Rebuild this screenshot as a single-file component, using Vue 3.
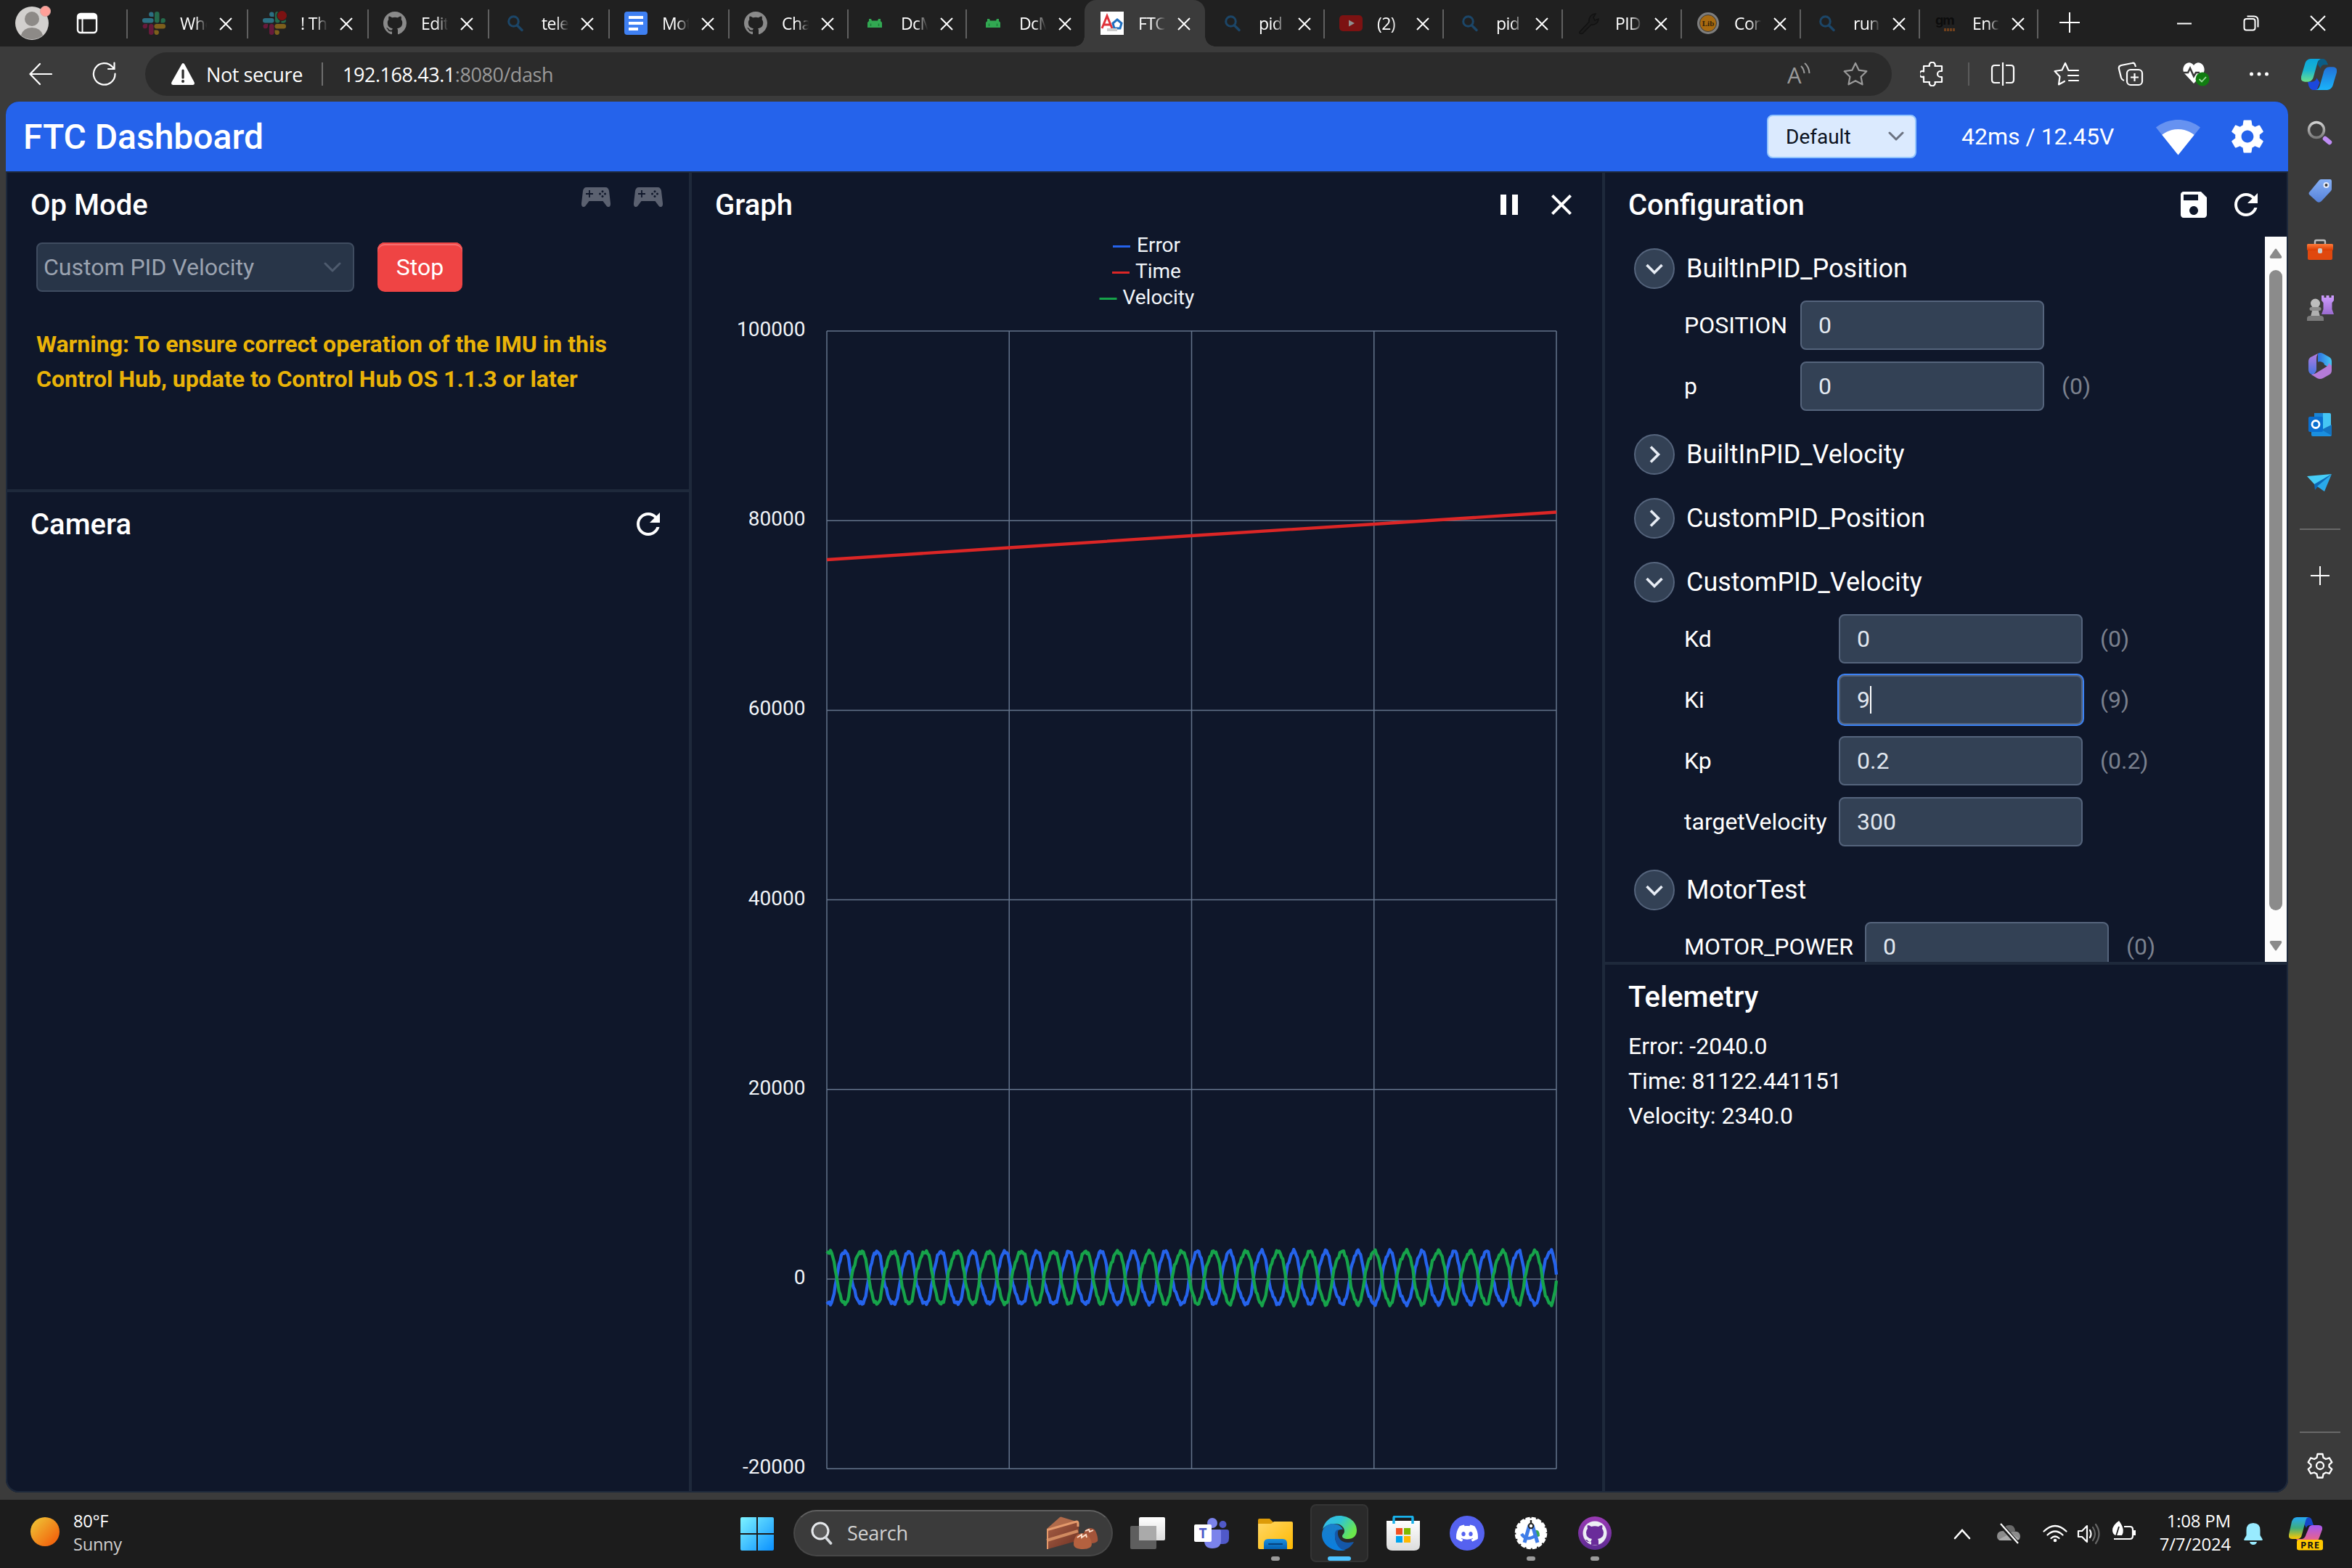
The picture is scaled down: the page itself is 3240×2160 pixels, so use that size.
<script setup>
const tabs = [
  { icon: 'slack', text: 'Whe', w: 166 },
  { icon: 'slack', text: '! Thr', dot: true, w: 166 },
  { icon: 'github', text: 'Editi', w: 166 },
  { icon: 'lens', text: 'tele', w: 166 },
  { icon: 'docs', text: 'Mot', w: 165 },
  { icon: 'github', text: 'Cha', w: 164 },
  { icon: 'android', text: 'DcM', w: 163 },
  { icon: 'android', text: 'DcM', w: 164 },
  { icon: 'first', text: 'FTC', active: true, w: 166 },
  { icon: 'lens', text: 'pid', w: 163 },
  { icon: 'youtube', text: '(2)', w: 164 },
  { icon: 'lens', text: 'pid', w: 164 },
  { icon: 'wrench', text: 'PID', w: 164 },
  { icon: 'lib', text: 'Con', label: 'Lib', w: 164 },
  { icon: 'lens', text: 'run', w: 164 },
  { icon: 'gm', text: 'Enc', label: 'gm', w: 163 },
]

const groups = [
  {
    name: 'BuiltInPID_Position', open: true, labelWidth: 160,
    fields: [{ k: 'POSITION', v: '0' }, { k: 'p', v: '0', cur: '(0)' }],
  },
  { name: 'BuiltInPID_Velocity', open: false },
  { name: 'CustomPID_Position', open: false },
  {
    name: 'CustomPID_Velocity', open: true, labelWidth: 213,
    fields: [
      { k: 'Kd', v: '0', cur: '(0)' },
      { k: 'Ki', v: '9', cur: '(9)', focus: true },
      { k: 'Kp', v: '0.2', cur: '(0.2)' },
      { k: 'targetVelocity', v: '300' },
    ],
  },
  { name: 'MotorTest', open: true, labelWidth: 249, fields: [{ k: 'MOTOR_POWER', v: '0', cur: '(0)' }] },
]

const telemetry = ['Error: -2040.0', 'Time: 81122.441151', 'Velocity: 2340.0']
const sideIcons = ['s-search', 's-tag', 's-tools', 's-games', 's-m365', 's-outlook', 's-send']
const apps = [
  { icon: 'a-view' },
  { icon: 'a-teams', label: 'T' },
  { icon: 'a-folder', run: true },
  { icon: 'a-edge', active: true },
  { icon: 'a-store' },
  { icon: 'a-discord' },
  { icon: 'a-studio', run: true },
  { icon: 'a-github', run: true },
]

// Chart geometry
const L = 1139
const R = 2144
const zeroY = 1762
const step = 261.2
const yTicks = [100000, 80000, 60000, 40000, 20000, 0, -20000].map((v) => ({ v, y: zeroY - (v / 20000) * step }))
const xTicks = [0, 1, 2, 3, 4].map((i) => L + (i * (R - L)) / 4)

const warp = [[0, 0], [0.225, 0.262], [0.485, 0.5], [0.665, 0.742], [1, 1]]
function warped(p) {
  for (let i = 1; i < warp.length; i++) {
    const [a, fa] = warp[i - 1]
    const [b, fb] = warp[i]
    if (p <= b) return fa + ((p - a) / (b - a)) * (fb - fa)
  }
  return 1
}
function wave(sign) {
  const pts = []
  const period = 44.18
  for (let x = L, i = 0; x <= R + 0.1; x += 1.675, i++) {
    const t = (x - 1143) / period
    const c = Math.cos(2 * Math.PI * warped(t - Math.floor(t)))
    const shaped = Math.sign(c) * Math.pow(Math.abs(c), 0.85)
    const jitter = Math.sin(i * 2.4) * 130 + Math.sin(i * 5.1) * 90
    const v = 138 + 2780 * shaped + jitter
    const val = sign > 0 ? v : 300 - v
    pts.push(`${x.toFixed(1)},${(zeroY - val * (step / 20000)).toFixed(1)}`)
  }
  return pts.join(' ')
}
const velocityLine = wave(1)
const errorLine = wave(-1)
</script>

<template>
  <div class="screen">
    <svg class="defs" width="0" height="0">
      <defs>
        <linearGradient id="gWin" x1="0" y1="0" x2="1" y2="1"><stop offset="0" stop-color="#7df3ff" /><stop offset="1" stop-color="#0a90ff" /></linearGradient>
        <linearGradient id="gCopA" x1="0" y1="0" x2="0" y2="1"><stop offset="0" stop-color="#0aa5dd" /><stop offset=".5" stop-color="#1ab5d0" /><stop offset="1" stop-color="#6be08a" /></linearGradient>
        <linearGradient id="gCopB" x1="0" y1="0" x2="0" y2="1"><stop offset="0" stop-color="#2370d8" /><stop offset="1" stop-color="#19b4fa" /></linearGradient>
        <linearGradient id="gPreA" x1="0" y1="0" x2="0" y2="1"><stop offset="0" stop-color="#25a7f5" /><stop offset=".5" stop-color="#3fae7c" /><stop offset="1" stop-color="#ffc800" /></linearGradient>
        <linearGradient id="gPreB" x1="0" y1="0" x2="0" y2="1"><stop offset="0" stop-color="#a458f2" /><stop offset="1" stop-color="#f2647e" /></linearGradient>
        <linearGradient id="gGray" x1="0" y1="0" x2="0" y2="1"><stop offset="0" stop-color="#d0d0d0" /><stop offset="1" stop-color="#7a7a7a" /></linearGradient>
        <linearGradient id="gPurple" x1="0" y1="0" x2="0" y2="1"><stop offset="0" stop-color="#cf9dff" /><stop offset="1" stop-color="#9a6bd0" /></linearGradient>
        <linearGradient id="gTag" x1="0" y1="0" x2="0" y2="1"><stop offset="0" stop-color="#86b0f5" /><stop offset="1" stop-color="#5681d8" /></linearGradient>
        <linearGradient id="gOrange" x1="0" y1="0" x2="0" y2="1"><stop offset="0" stop-color="#ff7a3a" /><stop offset="1" stop-color="#d83b01" /></linearGradient>
        <linearGradient id="gM1" x1="0" y1="0" x2="1" y2="0"><stop offset="0" stop-color="#2f6fe0" /><stop offset="1" stop-color="#45c8f5" /></linearGradient>
        <linearGradient id="gM2" x1="0" y1="0" x2="0" y2="1"><stop offset="0" stop-color="#b57be0" /><stop offset="1" stop-color="#3f74e0" /></linearGradient>
        <linearGradient id="gFold" x1="0" y1="0" x2="1" y2="1"><stop offset="0" stop-color="#ffd766" /><stop offset="1" stop-color="#ffb900" /></linearGradient>
        <linearGradient id="gBlue" x1="0" y1="0" x2="0" y2="1"><stop offset="0" stop-color="#1a90e0" /><stop offset="1" stop-color="#0560b0" /></linearGradient>
        <linearGradient id="gEdge1" x1="0" y1="0" x2="1" y2=".5"><stop offset="0" stop-color="#35b8f0" /><stop offset=".5" stop-color="#2fc4d4" /><stop offset="1" stop-color="#6be84c" /></linearGradient>
        <linearGradient id="gEdge2" x1="0" y1="0" x2="0" y2="1"><stop offset="0" stop-color="#1b7fc8" /><stop offset="1" stop-color="#0a7ee0" /></linearGradient>
        <linearGradient id="gGh" x1="0" y1="0" x2="0" y2="1"><stop offset="0" stop-color="#9a3bb5" /><stop offset="1" stop-color="#5d2a92" /></linearGradient>
        <linearGradient id="gWhite" x1="0" y1="0" x2="0" y2="1"><stop offset="0" stop-color="#ffffff" /><stop offset="1" stop-color="#dcdcdc" /></linearGradient>
        <linearGradient id="gCake" x1="0" y1="0" x2="1" y2="1"><stop offset="0" stop-color="#a85f45" /><stop offset="1" stop-color="#6e3224" /></linearGradient>
        <linearGradient id="gSun" x1="0" y1="0" x2="1" y2="1"><stop offset=".1" stop-color="#efc033" /><stop offset=".8" stop-color="#f26a10" /></linearGradient>
      </defs>

      <symbol id="slack" viewBox="0 0 32 32">
        <g fill="#2c6f82"><path d="M15.500 7h-3.300a3.200 3.200 0 1 1 3.300-3.300z" /><rect x="0" y="9" width="15.500" height="6.500" rx="3.200" /></g>
        <g fill="#256b4c"><rect x="17" y="0" width="6.500" height="15.500" rx="3.200" /><path d="M25.500 15.500v-3.300a3.200 3.200 0 1 1 3.300 3.300z" /></g>
        <g fill="#7d5f1c"><rect x="16.500" y="17" width="15.500" height="6.500" rx="3.200" /><path d="M16.500 25.500h3.300a3.200 3.200 0 1 1-3.300 3.300z" /></g>
        <g fill="#661a3b"><rect x="9" y="17" width="6.500" height="15" rx="3.200" /><path d="M7 17v3.300A3.200 3.200 0 1 1 3.200 17z" /></g>
      </symbol>
      <symbol id="github" viewBox="0 0 16 16">
        <path fill="#8a8a8a" d="M8 0C3.580 0 0 3.580 0 8c0 3.540 2.290 6.530 5.470 7.590.4.070.550-.170.550-.380 0-.190-.010-.820-.010-1.490-2.010.370-2.530-.490-2.690-.940-.090-.230-.480-.940-.820-1.130-.280-.150-.680-.520-.010-.530.630-.010 1.080.580 1.230.820.720 1.210 1.870.870 2.330.660.070-.520.280-.870.510-1.070-1.780-.2-3.640-.890-3.640-3.950 0-.870.310-1.590.820-2.150-.080-.2-.360-1.020.080-2.120 0 0 .670-.210 2.200.820.640-.180 1.320-.270 2-.270s1.360.090 2 .270c1.530-1.040 2.200-.820 2.200-.820.440 1.100.160 1.920.080 2.120.510.560.820 1.270.820 2.150 0 3.070-1.870 3.750-3.650 3.950.290.250.540.730.540 1.480 0 1.070-.010 1.930-.010 2.200 0 .210.150.460.550.380A8.010 8.010 0 0 0 16 8c0-4.420-3.580-8-8-8z" />
      </symbol>
      <symbol id="lens" viewBox="0 0 32 32"><circle cx="13.500" cy="13.500" r="6.800" fill="none" stroke="#1c4668" stroke-width="3" /><path d="M18.500 19l6.500 6.500" stroke="#1c4668" stroke-width="3.400" stroke-linecap="round" /></symbol>
      <symbol id="docs" viewBox="0 0 32 32"><rect width="32" height="32" rx="4" fill="#3f80f2" /><path d="M6 8h20M6 16h20M6 24h13" stroke="#fff" stroke-width="4" /></symbol>
      <symbol id="android" viewBox="0 0 32 32"><path d="M6 22v-7l2-2v-3h3l1 2.500h8l1-2.500h3v3l2 2v7z" fill="#32a852" /><path d="M10.500 16.500v3.500M21.500 16.500v3.500" stroke="#1c7a38" stroke-width="1.500" /></symbol>
      <symbol id="first" viewBox="0 0 32 32"><rect width="32" height="32" fill="#fff" /><path d="M2 23L9 6l7 17M4 18h9" fill="none" stroke="#e0343b" stroke-width="3" /><path d="M23 11l6 5-2 7h-8l-2-7z" fill="none" stroke="#1f6fc0" stroke-width="3" /><path d="M9 25h14" stroke="#ccc" stroke-width="4" /></symbol>
      <symbol id="youtube" viewBox="0 0 32 32"><rect y="5" width="32" height="22" rx="5" fill="#7c1212" /><path d="M13 11.500v9l8-4.500z" fill="#8f8f8f" /></symbol>
      <symbol id="wrench" viewBox="0 0 32 32"><path d="M3 28l13-14c-1-5 3-11 9-11l-3 5 2 4 5-2c0 5-5 9-10 8L7 30c-3 1-5 0-4-2z" fill="#1c1c1c" stroke="#121212" stroke-width="1.500" /></symbol>
      <symbol id="lib" viewBox="0 0 32 32"><circle cx="16" cy="16" r="15" fill="#7e7e7e" /><circle cx="16" cy="16" r="11.500" fill="#a86a10" stroke="#3b3b3b" /></symbol>
      <symbol id="gm" viewBox="0 0 32 32"><path d="M13 25h15" stroke="#70401c" stroke-width="4" stroke-dasharray="3 1" /></symbol>

      <symbol id="copilot" viewBox="0 0 48 42">
        <path d="M28 0c4 0 6 2 7 5l1.500 3H32c-4 0-5 2-6 5l-4-6 2-6z" fill="#0b5d86" />
        <path d="M16 42c-3 0-5-3-6-6l-1-5h5c4 0 6-2 7-5l4 6-4 10z" fill="#1b48dd" />
        <path d="M13 0h15c-3 0-5 2-6 5l-5 18c-1 5-4 8-8 8H5c-4 0-6-3-5-7L5 7c1-4 4-7 8-7z" fill="url(#gCopA)" />
        <path d="M35 42H19c3 0 5-2 6-5l5-18c1-5 4-8 8-8h5c4 0 6 3 5 7l-5 17c-1 4-4 7-8 7z" fill="url(#gCopB)" />
      </symbol>

      <symbol id="s-search" viewBox="0 0 40 40"><circle cx="15" cy="16" r="10.500" fill="none" stroke="url(#gGray)" stroke-width="3.500" /><path d="M27 28l6 5" stroke="#bf8cf5" stroke-width="6.500" stroke-linecap="round" /></symbol>
      <symbol id="s-tag" viewBox="0 0 40 40"><path d="M5 22L19 5q1-1 3-1h12q2 0 2 3v10q0 2-1 3L22 34q-3 3-6 1L5 25q-1-2 0-3z" fill="url(#gTag)" /><circle cx="28.500" cy="12" r="3" fill="#3b3b3b" stroke="#e8eefc" stroke-width="2" /></symbol>
      <symbol id="s-tools" viewBox="0 0 40 40"><path d="M13 12V9q0-2 2-2h10q2 0 2 2v3" fill="none" stroke="#bdbdbd" stroke-width="2.400" /><rect x="3" y="18" width="34" height="16" rx="2" fill="#e0480e" /><rect x="2" y="12" width="36" height="9" rx="1.500" fill="url(#gOrange)" /><rect x="17" y="18" width="6" height="7" rx="2" fill="#ccc" /></symbol>
      <symbol id="s-games" viewBox="0 0 40 40"><path d="M23 3h3.500v3h3V3h4v3h3V3H40v7l-2.500 3v9L40 29H23l2.500-7v-9L23 10z" transform="translate(-1 0)" fill="url(#gPurple)" /><circle cx="13.500" cy="14" r="6.500" fill="#bdbdbd" /><path d="M10 20h7l3 12H7z" fill="#b0b0b0" /><rect x="5.500" y="19" width="16" height="5" rx="2.500" fill="#8c8c8c" /><path d="M2 38v-3q0-4 4-4h15q4 0 4 4v3z" fill="#7a7a7a" /></symbol>
      <symbol id="s-m365" viewBox="0 0 40 40">
        <path d="M17 3q3-2 7 0l9 5q3 2 3 6v10L25 18q-4-2-8-1z" fill="url(#gM1)" />
        <path d="M4 14q0-4 3-6l10-5q-2 3-2 8v14q0 3-5 8l-3-2q-3-2-3-6z" fill="url(#gM2)" />
        <path d="M36 20v6q0 4-3 6l-9 5q-4 2-8 0l-8-5q4 0 8-3l13-8q3-2 3-5z" fill="#b57bd8" />
        <path d="M15 17q1-3 5-3 6 1 6 5 0 2-3 4l-6 3q-2-1-2-4z" fill="#3b3b3b" />
      </symbol>
      <symbol id="s-outlook" viewBox="0 0 40 40"><rect x="12" y="4" width="23" height="26" rx="2" fill="#45c6f5" /><rect x="12" y="4" width="12" height="14" fill="#1a86d8" /><path d="M8 26h28v8q0 2-2 2H10q-2 0-2-2z" fill="#1a8fe0" /><path d="M36 20v15L22 27z" fill="#1373c0" /><rect x="4" y="9" width="20" height="21" rx="2" fill="#0a6fd0" /><circle cx="14" cy="19.500" r="5" fill="none" stroke="#fff" stroke-width="2.800" /></symbol>
      <symbol id="s-send" viewBox="0 0 40 40"><path d="M2 11L36 8 13 23z" fill="#46cdf7" /><path d="M36 8L12 22l1 8 5-6z" fill="#0c6ab8" /><path d="M36 8L26 32l-10-7z" fill="#29a9ea" /></symbol>

      <symbol id="a-view" viewBox="0 0 48 48"><rect x="12" y="2" width="36" height="32" rx="2" fill="url(#gWhite)" /><rect x="0" y="14" width="36" height="32" rx="2" fill="#666" opacity=".9" /><path d="M12 14h24v20H12z" fill="#aaa" /></symbol>
      <symbol id="a-teams" viewBox="0 0 48 48"><circle cx="39.500" cy="12" r="5" fill="#5059c9" /><path d="M34 19h11q3 0 3 3v9q0 8-8 8h-6z" fill="#5059c9" /><circle cx="25" cy="10" r="7" fill="#7b83eb" /><path d="M14 19h21q2 0 2 2v13q0 11-12 11-11 0-11-11z" fill="#7b83eb" /><rect x="0" y="12" width="24" height="24" rx="2" fill="#fff" /></symbol>
      <symbol id="a-folder" viewBox="0 0 48 48"><path d="M0 6q0-2 2-2h14l5 5v8H0z" fill="#dd9b08" /><path d="M0 11h18l4-3h24q2 0 2 2v34q0 2-2 2H2q-2 0-2-2z" fill="url(#gFold)" /><path d="M8 46V38q0-6 6-6h20q6 0 6 6v8z" fill="url(#gBlue)" /><path d="M15 39h18" stroke="#06427d" stroke-width="2.200" stroke-linecap="round" /></symbol>
      <symbol id="a-edge" viewBox="0 0 48 48"><path d="M1 19C3 8 12 0 24 0c14 0 24 9 24 20 0 8-5 12-12 12-6 0-8-2-8-4s3-3 3-7c0-5-5-10-13-10C9 11 3 15 1 19z" fill="url(#gEdge1)" /><path d="M0 26c0-8 6-15 15-15 8 0 12 4 14 8-6-1-11 3-11 10 0 9 7 17 15 18-3 1-5 1-8 1C11 48 0 38 0 26z" fill="url(#gEdge2)" /><path d="M18 28c-1-6 2-9 5-9-3 6 0 18 13 18 4 0 6-1 8-1-3 6-8 10-15 11-7-2-11-11-11-19z" fill="#1457a8" /></symbol>
      <symbol id="a-store" viewBox="0 0 48 48"><path d="M1 7h46v33q0 8-8 8H9q-8 0-8-8z" fill="url(#gWhite)" /><path d="M11 11V3q0-2 2-2h22q2 0 2 2v8" fill="none" stroke="#18b1ea" stroke-width="3.400" /><path d="M14 17h9v9h-9z" fill="#f25022" /><path d="M25 17h9v9h-9z" fill="#7fba00" /><path d="M14 28h9v9h-9z" fill="#00a4ef" /><path d="M25 28h9v9h-9z" fill="#ffb900" /></symbol>
      <symbol id="a-discord" viewBox="0 0 48 48"><circle cx="24" cy="24" r="24" fill="#5562f0" /><path transform="translate(9 9) scale(1.250)" fill="#fff" d="M20.317 4.370a19.791 19.791 0 0 0-4.885-1.515.074.074 0 0 0-.079.037c-.211.375-.445.865-.608 1.250-1.845-.276-3.680-.276-5.487 0-.164-.393-.406-.874-.618-1.250a.077.077 0 0 0-.079-.037A19.736 19.736 0 0 0 3.677 4.370a.070.070 0 0 0-.032.028C.533 9.046-.319 13.580.099 18.058a.082.082 0 0 0 .031.056c2.053 1.508 4.041 2.423 5.993 3.029a.078.078 0 0 0 .084-.028c.462-.630.873-1.295 1.226-1.994a.076.076 0 0 0-.042-.106c-.653-.248-1.274-.550-1.872-.892a.077.077 0 0 1-.008-.128c.126-.094.252-.192.372-.291a.074.074 0 0 1 .078-.011c3.928 1.793 8.180 1.793 12.061 0a.074.074 0 0 1 .079.010c.120.099.246.198.373.292a.077.077 0 0 1-.007.128 12.299 12.299 0 0 1-1.873.891.077.077 0 0 0-.041.107c.360.698.772 1.363 1.225 1.993a.076.076 0 0 0 .084.029c1.961-.607 3.950-1.522 6.002-3.029a.077.077 0 0 0 .031-.055c.500-5.177-.838-9.674-3.549-13.660a.061.061 0 0 0-.031-.029zM8.020 15.331c-1.183 0-2.157-1.086-2.157-2.419s.956-2.419 2.157-2.419c1.211 0 2.176 1.095 2.157 2.419 0 1.333-.956 2.419-2.157 2.419zm7.975 0c-1.183 0-2.157-1.086-2.157-2.419s.955-2.419 2.157-2.419c1.211 0 2.176 1.095 2.157 2.419 0 1.333-.946 2.419-2.157 2.419z" /></symbol>
      <symbol id="a-studio" viewBox="0 0 48 48"><circle cx="24" cy="24" r="20.500" fill="#fff" stroke="#fff" stroke-width="3.600" stroke-dasharray="6 2.050" /><circle cx="24" cy="24" r="20.500" fill="#fff" /><path d="M29 20q7-2 7 8l-5 2z" fill="#3ba653" /><path d="M22 13L15 37M26 13l7 24" stroke="#3f7de8" stroke-width="5" /><path d="M11 25q7 11 20 2" fill="none" stroke="#3f7de8" stroke-width="4.500" /><circle cx="24" cy="14" r="3.200" fill="#fff" stroke="#222" stroke-width="2" /><path d="M24 6v5" stroke="#222" stroke-width="2.400" /></symbol>
      <symbol id="a-github" viewBox="0 0 48 48"><circle cx="24" cy="24" r="23" fill="url(#gGh)" /><circle cx="24" cy="24" r="16.500" fill="#eceef4" /><path d="M19 40v-4q-6 1-8-3 3 0 4 2 2 2 4 0 0-2 1-3-8-1-8-9 0-3 2-5-1-3 0-5 3 0 5 2 5-1.500 10 0 2-2 5-2 1 2 0 5 2 2 2 5 0 8-8 9 1 1 1 3v5z" fill="#6a2b9a" /></symbol>
    </svg>

    <header class="tabbar">
      <div class="tab-left">
        <div class="avatar">
          <svg width="46" height="46" viewBox="0 0 46 46"><circle cx="23" cy="23" r="23" fill="#d2d0ce" /><circle cx="23" cy="17" r="10" fill="#8d8a87" /><path d="M8 39.500q3-10.500 15-10.500t15 10.500A23 23 0 0 1 8 39.500z" fill="#8d8a87" /></svg>
          <i class="badge"></i>
        </div>
        <svg width="30" height="30" viewBox="0 0 30 30" class="tab-act"><rect x="2" y="2" width="26" height="26" rx="4" fill="none" stroke="#fff" stroke-width="2.400" /><path d="M2 6q0-4 4-4h18q4 0 4 4v3.500H2z" fill="#fff" /><path d="M8.500 9v19" stroke="#fff" stroke-width="2" /></svg>
      </div>
      <div v-for="(t, i) in tabs" :key="i" class="tab" :class="{ active: t.active, nosep: i === 9 }" :style="{ width: t.w + 'px' }">
        <span class="fav"><svg width="32" height="32"><use :href="'#' + t.icon" /></svg><i v-if="t.dot" class="fav-dot"></i><b v-if="t.label" :class="'lab-' + t.icon">{{ t.label }}</b></span>
        <span class="tab-text">{{ t.text }}</span>
        <svg class="x" width="18" height="18" viewBox="0 0 18 18"><path d="M1 1l16 16M17 1L1 17" stroke="#fff" stroke-width="2" /></svg>
      </div>
      <div class="newtab"><svg width="28" height="28" viewBox="0 0 28 28"><path d="M14 0v28M0 14h28" stroke="#fff" stroke-width="2" /></svg></div>
      <div class="winbtns">
        <svg width="22" height="22" viewBox="0 0 22 22"><path d="M1 11.500h20" stroke="#fff" stroke-width="2" /></svg>
        <svg width="22" height="22" viewBox="0 0 22 22" fill="none" stroke="#fff" stroke-width="2"><rect x="1.500" y="5" width="15" height="15.500" rx="3" /><path d="M5.500 1.500H15q5.500 0 5.500 5.500v9.500" /></svg>
        <svg width="22" height="22" viewBox="0 0 22 22"><path d="M1 1l20 20M21 1L1 21" stroke="#fff" stroke-width="2" /></svg>
      </div>
    </header>

    <div class="toolbar">
      <div class="nav">
        <svg width="32" height="32" viewBox="0 0 32 32" fill="none" stroke="#fff" stroke-width="2.200" stroke-linecap="round"><path d="M31 16H1.500M15 2L1.500 16 15 30" /></svg>
        <svg width="34" height="34" viewBox="0 0 34 34" fill="none" stroke="#fff" stroke-width="2.200" stroke-linecap="round"><path d="M31.500 16.500A14.800 14.800 0 1 1 28 7.300l2 2.200M30.500 1.500v8.500h-8.500" /></svg>
      </div>
      <div class="address">
        <svg width="34" height="32" viewBox="0 0 34 32"><path d="M17 1q1.500 0 2.500 2l13 24q1.500 4-2 4h-27q-3.500 0-2-4L15 3q1-2 2-2z" fill="#fff" /><path d="M17 11v10" stroke="#2b2b2b" stroke-width="3.200" stroke-linecap="round" /><circle cx="17" cy="26" r="2" fill="#2b2b2b" /></svg>
        <span class="notsec">Not secure</span>
        <i class="vsep"></i>
        <span class="url">192.168.43.1<em>:8080/dash</em></span>
        <div class="addr-icons">
          <svg width="32" height="34" viewBox="0 0 32 34" fill="none" stroke="#9a9a9a" stroke-width="2"><text x="0" y="30" font-family="Open Sans, sans-serif" font-size="31" fill="#9a9a9a" stroke="none">A</text><path d="M19 6q4 4 4.500 10M24 2q6 5 6.500 14" /></svg>
          <svg width="34" height="34" viewBox="0 0 34 34" fill="none" stroke="#9a9a9a" stroke-width="2.200" stroke-linejoin="round"><path d="M17 2l4.700 9.700 10.600 1.500-7.700 7.500 1.900 10.600L17 26.200l-9.500 5.100 1.900-10.600-7.700-7.500 10.600-1.500z" /></svg>
        </div>
      </div>
      <div class="tools">
        <svg width="34" height="34" viewBox="0 0 34 34" fill="none" stroke="#fff" stroke-width="2.200" stroke-linejoin="round"><path d="M5 6h8a4 4 0 1 1 7.500 0h9.500v7h-2a4 4 0 0 0 0 8h2v7h-9.500a4 4 0 1 1-7.500 0H5v-7.500a4 4 0 1 1 0-7z" /></svg>
        <i class="vsep dim"></i>
        <svg width="34" height="34" viewBox="0 0 34 34" fill="none" stroke="#fff" stroke-width="2.200"><path d="M13 5H6Q2 5 2 9v16q0 4 4 4h7M21 5h7q4 0 4 4v16q0 4-4 4h-7M17 1v32" /></svg>
        <svg width="36" height="34" viewBox="0 0 36 34" fill="none" stroke="#fff" stroke-width="2.200" stroke-linejoin="round" stroke-linecap="round"><path d="M30 12H20.500L16 2l-4.500 9.500L1.500 13l7 7.500-1.500 11 8-4.500M22 12h12M20 19h14M21 26h13" /></svg>
        <svg width="36" height="34" viewBox="0 0 36 34" fill="none" stroke="#fff" stroke-width="2.200" stroke-linejoin="round"><rect x="13" y="11" width="21" height="21" rx="5" /><path d="M23.500 16v11M18 21.500h11M25 7l-1-3q-1-3-4-2L5 5Q1 6 2 10l3 12q1 3 4 4" /></svg>
        <svg width="40" height="38" viewBox="0 0 40 38"><path d="M16 32L3 18C-3 9 9-3 16 7c7-10 19 2 13 11z" fill="#fff" /><path d="M0 17h8l3-6 5 11 3-5h5" fill="none" stroke="#3b3b3b" stroke-width="2.500" /><circle cx="28" cy="26" r="9.500" fill="#107c10" /><path d="M23.500 26l3.500 3.500 6-6.500" fill="none" stroke="#9fdc9f" stroke-width="1.800" /></svg>
        <svg width="28" height="8" viewBox="0 0 28 8" fill="#fff"><circle cx="3.500" cy="4" r="2.500" /><circle cx="14" cy="4" r="2.500" /><circle cx="24.500" cy="4" r="2.500" /></svg>
        <svg width="49" height="43" class="cop"><use href="#copilot" /></svg>
      </div>
    </div>

    <div class="main">
      <div class="app">
        <div class="appbar">
          <h1>FTC Dashboard</h1>
          <div class="layout-select">Default<svg width="22" height="14" viewBox="0 0 22 14"><path d="M2 2l9 9 9-9" fill="none" stroke="#6b7280" stroke-width="3" stroke-linecap="round" stroke-linejoin="round" /></svg></div>
          <span class="ping">42ms / 12.45V</span>
          <svg class="wifi" width="63" height="63" viewBox="0 0 24 24" fill="#fff"><path opacity=".3" d="M12 21.500L23.640 7c-.450-.340-4.930-4-11.640-4C5.280 3 .810 6.660.360 7z" /><path d="M3.530 10.950L12 21.500l8.470-10.550C20.040 10.620 16.810 8 12 8c-4.810 0-8.040 2.620-8.470 2.950z" /></svg>
          <svg class="gear" width="56" height="56" viewBox="0 0 24 24" fill="#fff"><path d="M19.140 12.940c.040-.3.060-.610.060-.940 0-.320-.020-.640-.070-.940l2.030-1.580c.180-.140.230-.410.120-.610l-1.920-3.320c-.120-.220-.370-.290-.590-.220l-2.390.960c-.5-.380-1.030-.7-1.620-.940l-.360-2.540c-.040-.240-.240-.410-.480-.410h-3.840c-.240 0-.430.170-.470.410l-.360 2.540c-.590.240-1.130.570-1.620.940l-2.390-.960c-.220-.080-.470 0-.590.220L2.740 8.870c-.120.210-.080.470.120.610l2.030 1.580c-.050.3-.090.630-.090.940s.020.640.070.940l-2.030 1.580c-.180.140-.230.410-.120.610l1.920 3.320c.120.220.370.290.590.220l2.390-.960c.5.380 1.030.7 1.620.940l.360 2.540c.050.240.240.410.480.410h3.840c.240 0 .440-.170.470-.410l.360-2.540c.590-.240 1.130-.560 1.620-.940l2.390.960c.220.080.470 0 .590-.220l1.920-3.320c.120-.220.070-.470-.120-.610zM12 15.600c-1.980 0-3.600-1.620-3.600-3.600s1.620-3.600 3.600-3.600 3.600 1.620 3.600 3.600-1.620 3.600-3.600 3.600z" /></svg>
        </div>

        <div class="panels">
          <div class="col col-left">
            <section class="panel opmode">
              <div class="phead">
                <h2>Op Mode</h2>
                <div class="pads">
                  <svg v-for="n in 2" :key="n" width="40" height="28" viewBox="0 0 40 28"><path fill="#5b6170" d="M7 0h26c3 0 4.500 2 5 5l2 17c.3 3-1 5-3 5-1.500 0-2.300-.8-3-2l-4.500-6h-19L6 25c-.7 1.200-1.500 2-3 2-2 0-3.300-2-3-5L2 5c.5-3 2-5 5-5z" /><path d="M11 4v10M6 9h10" stroke="#0f172a" stroke-width="1.800" /><g fill="#0f172a"><circle cx="29" cy="5.700" r="1.500" /><circle cx="29" cy="12.500" r="1.500" /><circle cx="25.500" cy="9.100" r="1.500" /><circle cx="32.500" cy="9.100" r="1.500" /></g></svg>
                </div>
              </div>
              <div class="oprow">
                <div class="opselect">Custom PID Velocity<svg width="24" height="16" viewBox="0 0 24 16"><path d="M2 3l10 10L22 3" fill="none" stroke="#4e5b6e" stroke-width="3" stroke-linecap="round" stroke-linejoin="round" /></svg></div>
                <button class="stop">Stop</button>
              </div>
              <p class="warn">Warning: To ensure correct operation of the IMU in this<br />Control Hub, update to Control Hub OS 1.1.3 or later</p>
            </section>
            <section class="panel camera">
              <div class="phead">
                <h2>Camera</h2>
                <div class="acts"><svg width="48" height="48" viewBox="0 0 24 24" fill="#fff"><path d="M17.650 6.350C16.200 4.900 14.210 4 12 4c-4.420 0-7.990 3.580-7.990 8s3.570 8 7.990 8c3.730 0 6.840-2.550 7.730-6h-2.080c-.820 2.330-3.040 4-5.650 4-3.310 0-6-2.690-6-6s2.690-6 6-6c1.660 0 3.140.690 4.220 1.780L13 11h7V4z" /></svg></div>
              </div>
            </section>
          </div>

          <section class="panel graph">
            <div class="phead">
              <h2>Graph</h2>
              <div class="acts">
                <svg width="48" height="48" viewBox="0 0 24 24" fill="#fff"><path d="M6 19h4V5H6zM14 5v14h4V5z" /></svg>
                <svg width="48" height="48" viewBox="0 0 24 24" fill="#fff"><path d="M19 6.410L17.590 5 12 10.590 6.410 5 5 6.410 10.590 12 5 17.590 6.410 19 12 13.410 17.590 19 19 17.590 13.410 12z" /></svg>
              </div>
            </div>
            <svg class="chart" width="1254" height="1728" viewBox="953 326 1254 1728">
              <g class="lgd">
                <path d="M1533 339.500h24" stroke="#2563eb" /><text x="1566" y="347">Error</text>
                <path d="M1532 375.500h24" stroke="#dc2626" /><text x="1564" y="383">Time</text>
                <path d="M1514.500 411.500h24" stroke="#16a34a" /><text x="1546.500" y="419">Velocity</text>
              </g>
              <g class="grid">
                <path v-for="t in yTicks" :key="'y' + t.v" :d="`M${L} ${t.y}H${R}`" />
                <path v-for="x in xTicks" :key="'x' + x" :d="`M${x} ${yTicks[0].y}V${yTicks[6].y}`" />
              </g>
              <g class="ylab"><text v-for="t in yTicks" :key="t.v" x="1109.500" :y="t.y + 7">{{ t.v }}</text></g>
              <g class="series">
                <polyline :points="errorLine" stroke="#2563eb" />
                <path :d="`M${L} 771L1390 754.500L1641 738L1893 722L${R} 705.500`" stroke="#dc2626" />
                <polyline :points="velocityLine" stroke="#16a34a" />
              </g>
            </svg>
          </section>

          <div class="col col-right">
            <section class="panel config">
              <div class="phead">
                <h2>Configuration</h2>
                <div class="acts">
                  <svg width="48" height="48" viewBox="0 0 24 24" fill="#fff"><path d="M17 3H5c-1.110 0-2 .9-2 2v14c0 1.100.890 2 2 2h14c1.100 0 2-.9 2-2V7zM12 19c-1.660 0-3-1.340-3-3s1.340-3 3-3 3 1.340 3 3-1.340 3-3 3zm3-10H5V5h10z" /></svg>
                  <svg width="48" height="48" viewBox="0 0 24 24" fill="#fff"><path d="M17.650 6.350C16.200 4.900 14.210 4 12 4c-4.420 0-7.990 3.580-7.990 8s3.570 8 7.990 8c3.730 0 6.840-2.550 7.730-6h-2.080c-.820 2.330-3.040 4-5.650 4-3.310 0-6-2.690-6-6s2.690-6 6-6c1.660 0 3.140.690 4.220 1.780L13 11h7V4z" /></svg>
                </div>
              </div>
              <div class="cfgbody">
                <div class="cfglist">
                  <div v-for="g in groups" :key="g.name" class="group">
                    <div class="ghead">
                      <span class="knob"><svg width="56" height="56" viewBox="0 0 56 56" fill="none" stroke="#e8edf5" stroke-width="3.600"><path v-if="g.open" d="M17.500 23L28 33.500 38.500 23" /><path v-else d="M23 17.500L33.500 28 23 38.500" /></svg></span>
                      <span>{{ g.name }}</span>
                    </div>
                    <div v-if="g.open" class="fields">
                      <div v-for="f in g.fields" :key="f.k" class="field">
                        <span class="flabel" :style="{ width: g.labelWidth + 'px' }">{{ f.k }}</span>
                        <span class="finput" :class="{ focus: f.focus }">{{ f.v }}<i v-if="f.focus" class="caret"></i></span>
                        <span class="fcur">{{ f.cur }}</span>
                      </div>
                    </div>
                  </div>
                </div>
                <div class="scroll">
                  <svg width="18" height="14" viewBox="0 0 18 14"><path d="M8 1q1-1 2 0l7 10q1 3-2 3H3q-3 0-2-3z" fill="#8b8b8b" /></svg>
                  <i class="thumb"></i>
                  <svg width="18" height="14" viewBox="0 0 18 14"><path d="M8 13q1 1 2 0l7-10q1-3-2-3H3Q0 0 1 3z" fill="#8b8b8b" /></svg>
                </div>
              </div>
            </section>
            <section class="panel telem">
              <div class="phead"><h2>Telemetry</h2></div>
              <p v-for="t in telemetry" :key="t">{{ t }}</p>
            </section>
          </div>
        </div>
      </div>

      <aside class="side">
        <div v-for="s in sideIcons" :key="s" class="sitem"><svg width="40" height="40"><use :href="'#' + s" /></svg></div>
        <i class="sline"></i>
        <svg class="splus" width="26" height="26" viewBox="0 0 26 26"><path d="M13 0v26M0 13h26" stroke="#fff" stroke-width="2" /></svg>
        <span class="grow"></span>
        <i class="sline"></i>
        <svg class="sgear" width="36" height="36" viewBox="0 0 36 36" fill="none" stroke="#fff" stroke-width="2.300" stroke-linejoin="round"><path d="M14.500 2h7l1 5 3.500 2 4.800-1.700 3.500 6-3.800 3.300v3l3.800 3.300-3.500 6L26 27.500l-3.500 2-1 5h-7l-1-5-3.500-2-4.800 1.400-3.500-6 3.800-3.300v-3L1.700 13.300l3.500-6L10 9l3.500-2z" /><circle cx="18" cy="18" r="5" /></svg>
      </aside>
    </div>

    <footer class="taskbar">
      <div class="weather">
        <svg width="42" height="42" viewBox="0 0 42 42"><circle cx="21" cy="21" r="20" fill="url(#gSun)" /></svg>
        <div class="wtext"><span>80°F</span><span class="sub">Sunny</span></div>
      </div>
      <div class="center">
        <svg class="win" width="46" height="46" viewBox="0 0 46 46"><path fill="url(#gWin)" d="M0 2q0-2 2-2h20v22H0zM24 0h20q2 0 2 2v20H24zM0 24h22v22H2q-2 0-2-2zM24 24h22v20q0 2-2 2H24z" /></svg>
        <div class="search">
          <svg width="30" height="32" viewBox="0 0 30 32"><circle cx="13" cy="13" r="11" fill="#5a5a5a" stroke="#e6e9ec" stroke-width="3" /><path d="M20.500 22l7 8" stroke="#d5d9dd" stroke-width="3.600" stroke-linecap="round" /></svg>
          <span>Search</span>
          <svg class="cake" width="72" height="46" viewBox="0 0 72 46"><path d="M1 17L19 1q2-1 3 0l20 6-41 14z" fill="#b06a4a" /><path d="M2 18L42 6q3 0 3 3v24L2 45z" fill="url(#gCake)" /><path d="M2 18.500L42 7q2 0 2 3v4" fill="none" stroke="#e49a6c" stroke-width="3" /><path d="M1 33l43-13" stroke="#d08a60" stroke-width="4" /><path d="M2 17v28" stroke="#e49a6c" stroke-width="2" /><path d="M52 22q3-6 9-6t8 6q3 8 2 12-3 3-8 3z" fill="#a3543a" /><path d="M38 38q0-14 12-15 11 1 13 15 0 7-12 7-13 0-13-7z" fill="#b4613f" /><path d="M43 29l6-4 0 4 6-4 1 4M54 20l5-2 1 3 5-2" stroke="#ffe3cf" stroke-width="1.800" fill="none" /></svg>
        </div>
        <div v-for="a in apps" :key="a.icon" class="appi" :class="{ act: a.active }">
          <svg width="48" height="48"><use :href="'#' + a.icon" /></svg>
          <b v-if="a.label" class="lab-app">{{ a.label }}</b>
          <i v-if="a.active" class="bar"></i>
          <i v-else-if="a.run" class="dot"></i>
        </div>
      </div>
      <div class="tray">
        <svg class="t-chev" width="24" height="16" viewBox="0 0 24 16"><path d="M2 14L12 3l10 11" fill="none" stroke="#fff" stroke-width="2.600" stroke-linecap="round" /></svg>
        <svg class="t-cloud" width="34" height="30" viewBox="0 0 34 30"><path d="M9 12q2-10 10-9 6 0 7 8l-15 5z" fill="#6a6a6a" /><path d="M7 24q-6 0-6-6 0-6 7-7 5 0 8 4l6-3q10-2 11 6 0 6-6 6z" fill="#8c8c8c" /><path d="M3 23l17-9 12 8q-2 2-5 2H8q-3 0-5-1z" fill="#ababab" /><path d="M5 1l25 28" stroke="#1c1c1c" stroke-width="6" /><path d="M6 1l24 27" stroke="#fff" stroke-width="2.200" /></svg>
        <svg class="t-wifi" width="34" height="26" viewBox="0 0 34 26" fill="none" stroke="#fff" stroke-width="2.200" stroke-linecap="round"><path d="M1.500 9.500q15.500-15 31 0M6.500 14.500q10.500-10 21 0M11.500 19q5.500-5 11 0" /><circle cx="17" cy="22" r="2.300" fill="#fff" stroke="none" /></svg>
        <svg class="t-vol" width="34" height="30" viewBox="0 0 34 30" fill="none" stroke-width="2.200" stroke-linecap="round"><path d="M2 11v8h5l7 7V4l-7 7z" stroke="#fff" stroke-linejoin="round" /><path d="M18 10q3 5 0 10" stroke="#fff" /><path d="M22 6q6 9 0 18M26 2q9 13 0 26" stroke="#666" /></svg>
        <svg class="t-bat" width="34" height="30" viewBox="0 0 34 30"><path d="M17 8h8q4 0 4 4v9q0 4-4 4H3" fill="none" stroke="#fff" stroke-width="2.200" /><path d="M30 13v7h3v-7z" fill="#fff" /><path d="M10 0Q1 6 1 13q0 5 4 7h9q5-8-4-20z" fill="#fff" /><path d="M10 8L5 24" stroke="#1c1c1c" stroke-width="1.800" /></svg>
        <div class="clock"><span>1:08 PM</span><span>7/7/2024</span></div>
        <svg class="t-bell" width="26" height="30" viewBox="0 0 26 30" fill="#99ebff"><path d="M13 0q9.500 0 9.500 10v7l3 5q1 2-1 2H1.500q-2 0-1-2l3-5v-7Q3.500 0 13 0zM8 26h10q-1 4-5 4t-5-4z" /></svg>
        <svg class="t-pre" width="48" height="46" viewBox="0 0 48 46"><path d="M26 0q5 0 6 5l2 6h-5q-4 0-5 4l-4-8z" fill="#1546c8" /><path d="M11 0h16q-3 1-4 5l-5 19q-1 6-7 6H5q-6 0-5-6L4 6q2-6 7-6z" fill="url(#gPreA)" /><path d="M10 30h8q4 0 6-7l3-7q1-5 6-5h8q6 0 5 6l-4 11q-2 6-7 6H14z" fill="url(#gPreB)" /><rect x="11" y="31" width="36" height="14.500" rx="3" fill="#ffc800" /><text x="29.500" y="43" text-anchor="middle" font-family="Open Sans, sans-serif" font-weight="700" font-size="13" letter-spacing="1" fill="#151515">PRE</text></svg>
      </div>
    </footer>
  </div>
</template>

<style>
body { margin: 0; background: #3b3b3b; overflow: hidden; }
</style>

<style scoped>
.screen { width: 3240px; height: 2160px; display: flex; flex-direction: column; background: #3b3b3b; overflow: hidden; font-family: "Open Sans", sans-serif; color: #fff; }
.screen * { box-sizing: border-box; }
svg { display: block; flex: none; }
.defs { position: absolute; }
h1, h2, p { margin: 0; }

.tabbar { height: 64px; flex: none; display: flex; background: #202020; }
.tab-left { width: 174px; flex: none; display: flex; align-items: center; padding-left: 21px; }
.avatar { position: relative; }
.badge { position: absolute; right: -3px; top: -1px; width: 15px; height: 15px; border-radius: 50%; background: #ff9f98; border: 1px solid #d9a5a0; }
.tab-act { margin-left: 38px; }
.tab { position: relative; flex: none; display: flex; align-items: center; padding-left: 22px; }
.tab::before { content: ""; position: absolute; left: 0; top: 13px; width: 2px; height: 40px; background: #606060; }
.tab.nosep::before { display: none; }
.tab.active { background: #3b3b3b; border-radius: 16px 16px 0 0; }
.tab.active::before { left: -14px; top: 50px; width: 14px; height: 14px; background: radial-gradient(circle at 0 0, transparent 13.500px, #3b3b3b 14px); }
.tab.active::after { content: ""; position: absolute; right: -14px; top: 50px; width: 14px; height: 14px; background: radial-gradient(circle at 100% 0, transparent 13.500px, #3b3b3b 14px); }
.fav { position: relative; }
.fav-dot { position: absolute; right: -1px; top: -1px; width: 13px; height: 13px; border-radius: 50%; background: #7c1212; box-shadow: 0 0 0 1px #202020; }
.lab-lib { position: absolute; left: 0; top: 8px; width: 32px; text-align: center; font: 700 11px/16px "Liberation Serif", serif; color: #33220a; }
.lab-gm { position: absolute; left: 1px; top: 2px; font: 700 18px/20px Inter, sans-serif; letter-spacing: -1px; color: #0c0c0c; }
.tab-text { width: 38px; margin-left: 20px; overflow: hidden; white-space: nowrap; font-size: 23px; letter-spacing: -0.600px; line-height: 40px; -webkit-mask-image: linear-gradient(90deg, #000 55%, transparent 98%); mask-image: linear-gradient(90deg, #000 55%, transparent 98%); }
.tab .x { margin: 2px 0 0 16px; }
.newtab { width: 192px; flex: none; padding: 17px 0 0 31px; background: linear-gradient(#606060, #606060) no-repeat 0 13px / 2px 40px; }
.winbtns { display: flex; align-items: center; gap: 70px; }

.toolbar { height: 76px; flex: none; display: flex; align-items: center; padding-left: 40px; }
.nav { width: 160px; flex: none; display: flex; align-items: center; gap: 55px; }
.address { width: 2406px; flex: none; height: 60px; border-radius: 30px; background: #2b2b2b; display: flex; align-items: center; padding-left: 35px; }
.notsec { width: 159px; margin-left: 15px; font-size: 27px; letter-spacing: -0.400px; white-space: nowrap; }
.vsep { width: 2px; height: 32px; background: #6e6e6e; }
.vsep.dim { background: #5c5c5c; margin: 0 29px 0 32px; }
.url { margin-left: 27px; font-size: 27px; letter-spacing: -0.450px; }
.url em { font-style: normal; color: #9a9a9a; }
.addr-icons { margin-left: auto; margin-right: 33px; display: flex; gap: 45px; }
.tools { display: flex; flex: none; align-items: center; padding-left: 39px; }
.tools svg + svg { margin-left: 52.500px; }
.tools svg.cop { margin-left: 44px; }

.main { flex: none; height: 1926px; display: flex; padding-left: 8px; }
.app { width: 3144px; height: 1916px; background: #0f172a; border-radius: 18px; overflow: hidden; display: flex; flex-direction: column; font-family: Roboto, sans-serif; }
.appbar { height: 96px; flex: none; background: #2563eb; display: flex; align-items: center; padding: 0 28px 0 24px; }
h1 { font-size: 48px; font-weight: 500; width: 2402px; }
.layout-select { width: 206px; height: 60px; border: 2px solid #93c5fd; border-radius: 8px; background: #dbeafe; color: #0b1220; font-size: 28px; display: flex; align-items: center; justify-content: space-between; padding: 0 15px 0 24px; }
.ping { width: 266px; flex: none; padding-left: 62px; font-size: 32px; white-space: nowrap; }
.wifi { margin-left: 63px; }
.gear { margin-left: 36px; }

.panels { height: 1820px; display: flex; background: #1e293b; }
.col { display: flex; flex-direction: column; }
.col-left { width: 943px; }
.col-right { width: 943px; }
.panel { background: #0f172a; border: 2px solid #1e293b; display: flex; flex-direction: column; }
.graph { width: 1258px; }
.opmode { height: 440px; }
.camera { flex: 1; border-bottom-left-radius: 18px; }
.config { height: 1091px; }
.telem { flex: 1; border-bottom-right-radius: 18px; }
.phead { height: 88px; flex: none; display: flex; align-items: center; justify-content: space-between; padding: 0 32px; }
h2 { font-size: 40px; font-weight: 500; line-height: 56px; padding-top: 1px; }
.acts { display: flex; gap: 24px; }
.pads { display: flex; gap: 32px; padding: 0 4px 20px 0; }

.oprow { display: flex; gap: 32px; padding: 8px 0 0 40px; }
.opselect { width: 438px; height: 68px; border: 2px solid #3f4c60; border-radius: 8px; background: #283548; color: #9ba3b0; font-size: 32px; display: flex; align-items: center; justify-content: space-between; padding: 0 16px 0 8px; }
.stop { width: 117px; height: 68px; border: 0; border-radius: 10px; background: #ef4444; color: #fff; font: 400 32px Roboto, sans-serif; box-shadow: inset 0 2px 0 #ef4444, inset 0 4px 0 #f56f6f; padding: 0; }
.warn { margin: 48px 0 0 40px; font-size: 32px; line-height: 48px; font-weight: 700; color: #eab308; white-space: nowrap; }

.lgd path { stroke-width: 3; }
.lgd text, .ylab text { font: 28px Roboto, sans-serif; fill: #f1f5f9; }
.ylab text { text-anchor: end; }
.grid path { fill: none; stroke: #64748b; stroke-width: 1.500; }
.series > * { fill: none; stroke-width: 4.300; stroke-linejoin: round; }

.cfgbody { flex: 1; min-height: 0; display: flex; }
.cfglist { width: 909px; overflow: hidden; padding: 16px 0 0 40px; display: flex; flex-direction: column; gap: 32px; }
.group { flex: none; display: flex; flex-direction: column; gap: 16px; }
.ghead { display: flex; align-items: center; gap: 16px; font-size: 36px; height: 56px; }
.knob { width: 56px; height: 56px; border-radius: 50%; background: #334155; border: 2px solid #55647c; display: flex; align-items: center; justify-content: center; }
.fields { display: flex; flex-direction: column; gap: 16px; padding-left: 69px; font-size: 32px; }
.field { display: flex; align-items: center; height: 68px; }
.flabel { flex: none; white-space: nowrap; }
.finput { width: 336px; height: 68px; flex: none; border: 2px solid #55647c; border-radius: 8px; background: #334155; color: #e2e8f0; display: flex; align-items: center; padding-left: 23px; }
.finput.focus { box-shadow: 0 0 0 2px #3b82f6; }
.caret { width: 2px; height: 38px; background: #fff; }
.fcur { margin-left: 24px; color: #7b818e; }
.scroll { width: 30px; background: #fcfcfc; display: flex; flex-direction: column; align-items: center; padding-top: 16px; }
.thumb { width: 18px; height: 882px; border-radius: 9px; background: #8b8b8b; margin: 16px 0 42px; }
.telem p { font-size: 32px; line-height: 48px; padding-left: 32px; }

.side { width: 88px; height: 1926px; display: flex; flex-direction: column; align-items: center; padding-top: 3px; }
.sitem { height: 80.300px; display: flex; align-items: center; }
.sline { width: 56px; height: 2px; background: #686868; margin-top: 23px; }
.splus { margin-top: 50px; }
.grow { flex: 1; }
.sgear { margin: 27px 0 29px; }

.taskbar { height: 94px; flex: none; background: #1c1c1c; display: flex; align-items: center; }
.weather { width: 1020px; padding-left: 41px; display: flex; align-items: center; gap: 18px; }
.weather > svg { margin-top: -6px; }
.wtext { display: flex; flex-direction: column; font-size: 23.500px; line-height: 32px; letter-spacing: -0.200px; margin-top: -4px; }
.sub { color: #cfcfcf; }
.center { width: 1671px; display: flex; align-items: center; }
.search { width: 440px; height: 64px; margin: -3px 8px 0 27px; border-radius: 32px; background: #3b3b3b; border: 2px solid #484848; border-top-color: #606060; display: flex; align-items: center; padding: 0 18px 0 22px; }
.search span { margin-left: 20px; font-size: 27px; letter-spacing: -0.300px; color: #d2d2d2; }
.cake { margin-left: auto; }
.appi { position: relative; width: 80px; height: 80px; margin: -2px 8px 0 0; display: flex; align-items: center; justify-content: center; border-radius: 8px; }
.appi.act { background: #2a2a2a; border: 2px solid #343434; }
.lab-app { position: absolute; left: 16px; top: 28px; width: 24px; text-align: center; font-size: 19px; line-height: 24px; color: #5059c9; }
.bar, .dot { position: absolute; bottom: 2px; left: 50%; height: 6px; border-radius: 3px; transform: translateX(-50%); }
.act .bar { bottom: 0; width: 32px; background: #4cc2ff; }
.dot { width: 12px; background: #9a9a9a; }
.tray { display: flex; align-items: center; }
.t-cloud { margin-left: 35px; }
.t-wifi { margin-left: 30px; }
.t-vol { margin-left: 13px; }
.t-bat { margin-left: 14px; margin-top: -6px; }
.clock { width: 130px; display: flex; flex-direction: column; align-items: flex-end; font-size: 24px; line-height: 32px; letter-spacing: -0.200px; margin-top: -4px; }
.t-bell { margin-left: 18px; }
.t-pre { margin-left: 36px; }
</style>
